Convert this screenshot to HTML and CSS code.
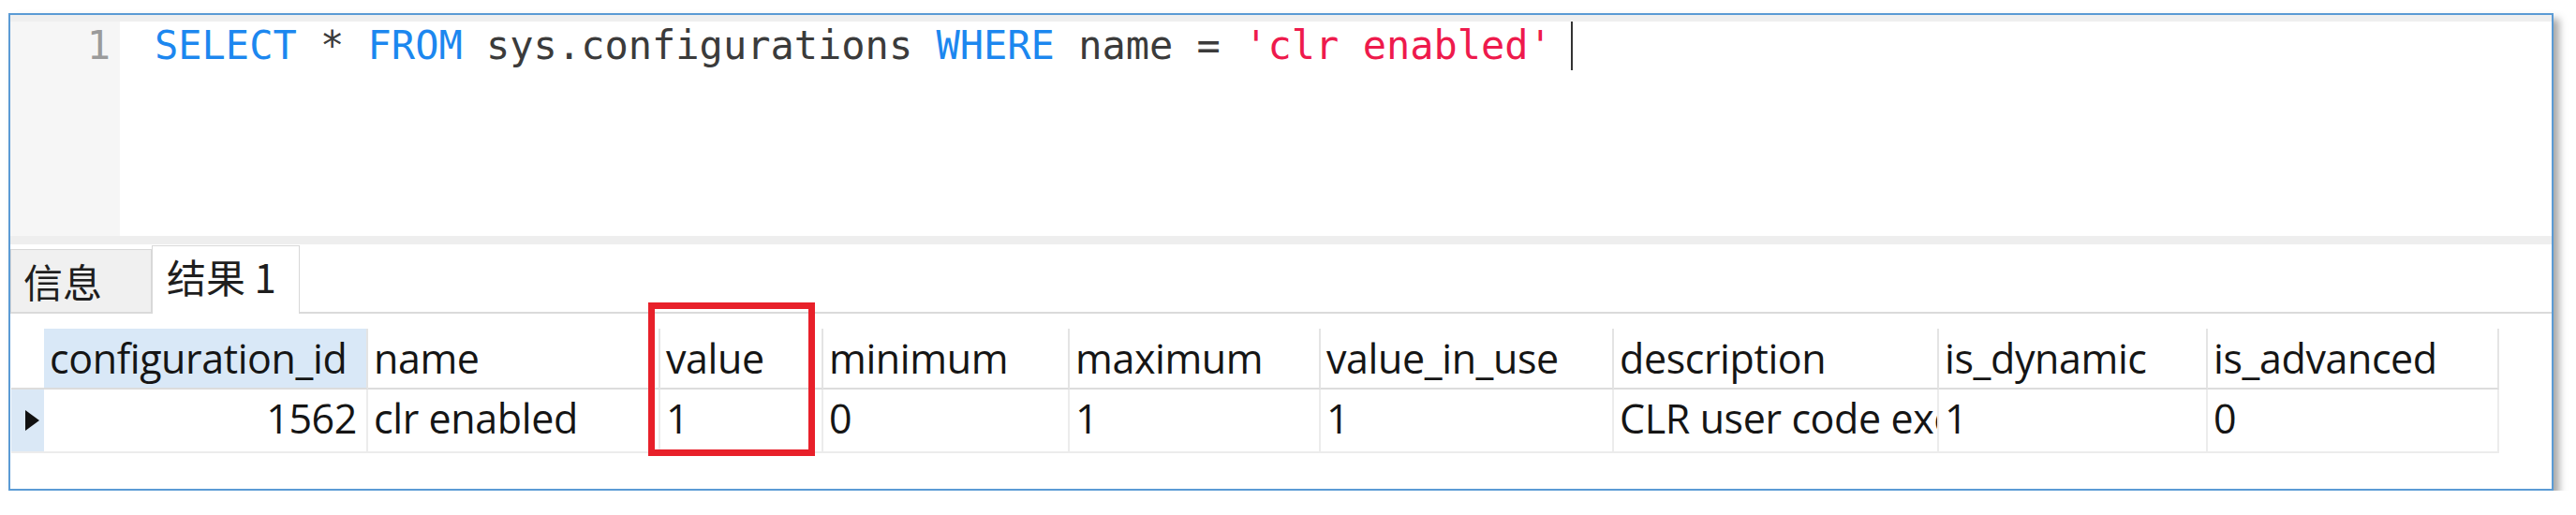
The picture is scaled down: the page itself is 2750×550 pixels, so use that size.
FILE: index.html
```html
<!DOCTYPE html>
<html lang="zh">
<head>
<meta charset="utf-8">
<title>Query</title>
<link rel="stylesheet" href="styles.css">
</head>
<body>
<div class="window">
  <div class="editor-top"></div>
  <div class="editor">
    <div class="gutter"><div class="ln">1</div></div>
    <div class="code"><span class="kw">SELECT</span> * <span class="kw">FROM</span> sys.configurations <span class="kw">WHERE</span> name = <span class="str">'clr enabled'</span> <span class="caret"></span></div>
  </div>
  <div class="splitter"></div>
  <div class="tabs">
    <div class="tab tab-info">信息</div>
    <div class="tab tab-result">结果 1</div>
    <div class="tab-fill"></div>
  </div>
  <div class="results">
    <div class="grid-wrap">
      <div class="grid">
        <div class="hd corner"></div>
        <div class="hd sel">configuration_id</div>
        <div class="hd">name</div>
        <div class="hd">value</div>
        <div class="hd">minimum</div>
        <div class="hd">maximum</div>
        <div class="hd">value_in_use</div>
        <div class="hd">description</div>
        <div class="hd">is_dynamic</div>
        <div class="hd">is_advanced</div>

        <div class="cell indicator"><span class="tri"></span></div>
        <div class="cell num">1562</div>
        <div class="cell">clr enabled</div>
        <div class="cell">1</div>
        <div class="cell">0</div>
        <div class="cell">1</div>
        <div class="cell">1</div>
        <div class="cell">CLR user code execution enabled in the server</div>
        <div class="cell">1</div>
        <div class="cell">0</div>
      </div>
      <div class="mark"></div>
    </div>
  </div>
</div>
</body>
</html>
```

FILE: styles.css
```css
html, body {
  margin: 0;
  padding: 0;
  background: #ffffff;
}

.window {
  box-sizing: border-box;
  width: 2717px;
  height: 510px;
  margin: 14px 0 0 9px;
  border: 2px solid #5b9bd5;
  background: #ffffff;
  box-shadow: 6px 6px 8px rgba(0, 0, 0, 0.35);
  display: flex;
  flex-direction: column;
}

.editor-top {
  flex: none;
  height: 7px;
  background: #efefef;
}

.editor {
  flex: none;
  height: 229px;
  display: flex;
}

.gutter {
  flex: none;
  box-sizing: border-box;
  width: 117px;
  background: #f6f6f6;
  padding-right: 10px;
  text-align: right;
  font-family: "DejaVu Sans Mono", monospace;
  font-size: 42px;
  line-height: 52px;
  color: #9b9b9b;
}

.code {
  padding-left: 37px;
  font-family: "DejaVu Sans Mono", monospace;
  font-size: 42px;
  line-height: 52px;
  color: #3b3b3b;
  white-space: pre;
}

.kw {
  color: #1c87ef;
}

.str {
  color: #ee1a4c;
}

.caret {
  display: inline-block;
  width: 2px;
  height: 52px;
  margin-left: -5px;
  background: #333333;
  vertical-align: top;
}

.splitter {
  flex: none;
  height: 9px;
  background: #eeeeee;
}

.tabs {
  flex: none;
  height: 74px;
  display: flex;
  align-items: flex-end;
}

.tab {
  box-sizing: border-box;
  display: flex;
  align-items: center;
  font-family: "Noto Sans CJK SC", sans-serif;
  font-size: 42px;
  line-height: 1;
  color: #1e1e1e;
}

.tab-info {
  width: 151px;
  height: 69px;
  padding-left: 13px;
  background: #f0f0f0;
  border: 1px solid #d8d8d8;
  border-bottom: 2px solid #dadada;
}

.tab-result {
  width: 158px;
  height: 73px;
  padding-left: 15px;
  padding-bottom: 8px;
  background: #ffffff;
  border: 1px solid #d8d8d8;
  border-bottom: none;
}

.tab-fill {
  flex: 1;
  border-bottom: 2px solid #dadada;
}

.results {
  flex: 1;
  padding: 16px 0 0 1px;
}

.grid-wrap {
  position: relative;
  width: 2656px;
}

.grid {
  display: grid;
  grid-template-columns: 35px 346px 312px 174px 263px 268px 313px 347px 287px 311px;
  grid-template-rows: 65px 68px;
  font-family: "Open Sans", sans-serif;
  font-size: 43px;
  letter-spacing: -0.4px;
  color: #151515;
}

.hd,
.cell {
  box-sizing: border-box;
  padding-left: 6px;
  white-space: nowrap;
  overflow: hidden;
}

.hd {
  line-height: 63px;
  border-right: 2px solid #e4e4e4;
  border-bottom: 2px solid #dcdcdc;
}

.hd.corner {
  border-right: none;
}

.hd.sel {
  background: #d9e8f7;
}

.cell {
  line-height: 62px;
  border-right: 2px solid #ececec;
  border-bottom: 2px solid #ececec;
}

.cell.num {
  text-align: right;
  padding-right: 10px;
}

.cell.indicator {
  display: flex;
  align-items: center;
  padding-left: 15px;
  background: #dae8f6;
  border-right: none;
}

.tri {
  width: 0;
  height: 0;
  border-left: 15px solid #111111;
  border-top: 11px solid transparent;
  border-bottom: 11px solid transparent;
}

.mark {
  position: absolute;
  left: 680px;
  top: -28px;
  box-sizing: border-box;
  width: 178px;
  height: 164px;
  border: 7px solid #e8202a;
}
```
